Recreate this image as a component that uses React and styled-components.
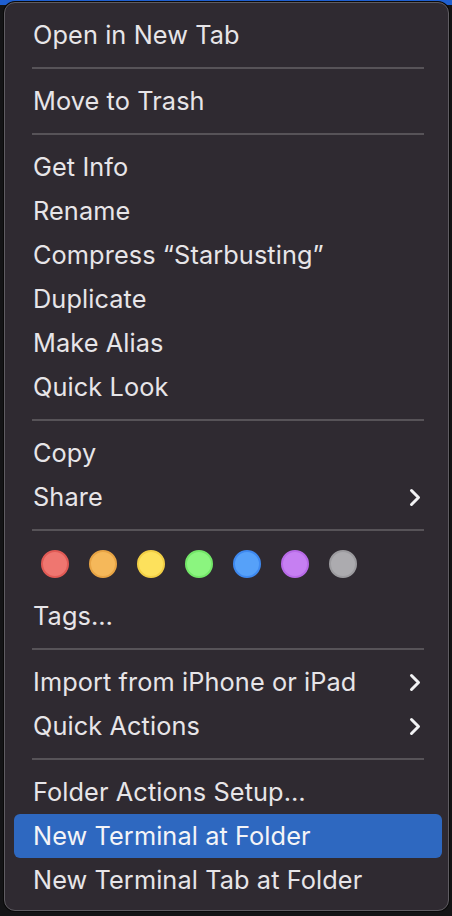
import React from "react";
import styled, { createGlobalStyle } from "styled-components";

const Global = createGlobalStyle`
  html, body {
    margin: 0;
    padding: 0;
    width: 452px;
    height: 916px;
    overflow: hidden;
  }
  body {
    background: linear-gradient(to bottom, #1f5fd0 0px, #1f5fd0 5px, #141416 5px, #141416 100%);
    font-family: Inter, "Noto Sans", "Liberation Sans", sans-serif;
    -webkit-font-smoothing: antialiased;
  }
`;

const Desktop = styled.div`
  padding: 2px 3px 0 4px;
`;

const Menu = styled.div`
  width: 445px;
  height: 909px;
  box-sizing: border-box;
  background: #2f2a31;
  border: 1px solid #5f5c62;
  border-radius: 11px;
  box-shadow: 0 0 0 1px #0a0a0a;
  padding: 10px 6px 8px 9px;
  display: flex;
  flex-direction: column;
`;

const Item = styled.div`
  height: 44px;
  flex: none;
  display: flex;
  align-items: center;
  justify-content: space-between;
  padding: 0 20px 0 19px;
  border-radius: 6px;
  background: ${(p) => (p.$active ? "#2e68c0" : "transparent")};
  color: ${(p) => (p.$active ? "#f4f4f7" : "#e7e5e8")};
  font-size: 25.3px;
  letter-spacing: 0.1px;
  white-space: nowrap;
`;

const Label = styled.span`
  line-height: 1;
`;

const Separator = styled.div`
  height: 22px;
  flex: none;
  display: flex;
  align-items: center;
  padding: 0 18px 0 18px;
  &::after {
    content: "";
    display: block;
    width: 100%;
    height: 2px;
    background: #575358;
  }
`;

const TagRow = styled.div`
  height: 53px;
  flex: none;
  display: flex;
  align-items: flex-start;
  padding: 9px 0 0 27px;
  gap: 20px;
  box-sizing: border-box;
`;

const Dot = styled.span`
  width: 28px;
  height: 28px;
  border-radius: 50%;
  box-sizing: border-box;
  background: ${(p) => p.$fill};
  border: 2px solid ${(p) => p.$ring};
  flex: none;
`;

const Chevron = () => (
  <svg width="12" height="19" viewBox="0 0 12 19" style={{ marginRight: 1 }}>
    <polyline
      points="2.5,2.5 9.5,9.5 2.5,16.5"
      fill="none"
      stroke="#f2f2f4"
      strokeWidth="3"
      strokeLinecap="round"
      strokeLinejoin="round"
    />
  </svg>
);

const dots = [
  ["#ef7670", "#e15a55"],
  ["#f5b85a", "#e8a444"],
  ["#fde15c", "#f2cf45"],
  ["#8bf57f", "#73e768"],
  ["#56a1f9", "#3e89f0"],
  ["#c67ff2", "#b86ae8"],
  ["#acabaf", "#9c9b9f"],
];

const Row = ({ children, sub, active }) => (
  <Item $active={active}>
    <Label>{children}</Label>
    {sub && <Chevron />}
  </Item>
);

export default function App() {
  return (
    <>
      <Global />
      <Desktop>
        <Menu>
          <Row>Open in New Tab</Row>
          <Separator />
          <Row>Move to Trash</Row>
          <Separator />
          <Row>Get Info</Row>
          <Row>Rename</Row>
          <Row>Compress “Starbusting”</Row>
          <Row>Duplicate</Row>
          <Row>Make Alias</Row>
          <Row>Quick Look</Row>
          <Separator />
          <Row>Copy</Row>
          <Row sub>Share</Row>
          <Separator />
          <TagRow>
            {dots.map(([f, r]) => (
              <Dot key={f} $fill={f} $ring={r} />
            ))}
          </TagRow>
          <Row>Tags…</Row>
          <Separator />
          <Row sub>Import from iPhone or iPad</Row>
          <Row sub>Quick Actions</Row>
          <Separator />
          <Row>Folder Actions Setup…</Row>
          <Row active>New Terminal at Folder</Row>
          <Row>New Terminal Tab at Folder</Row>
        </Menu>
      </Desktop>
    </>
  );
}
